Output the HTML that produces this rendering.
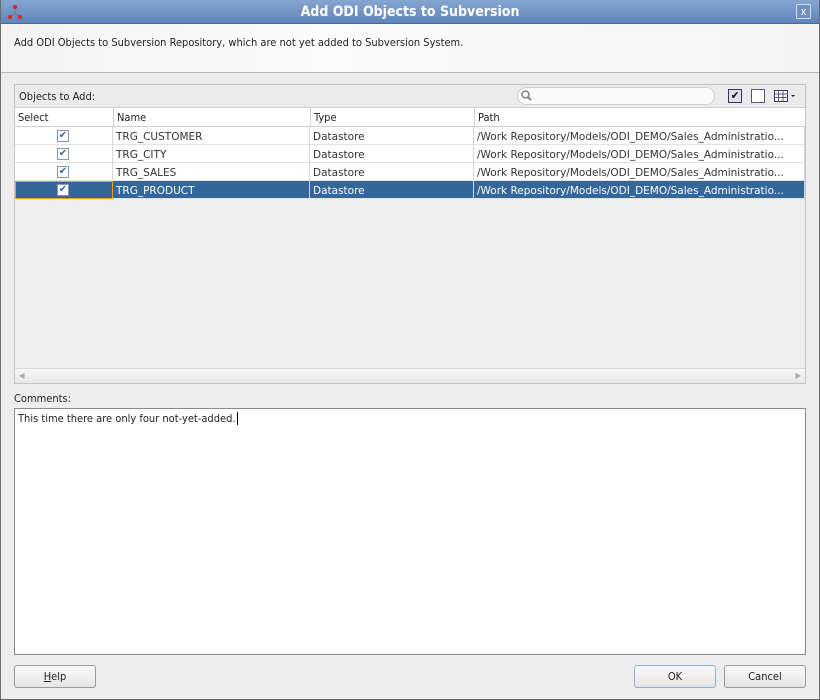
<!DOCTYPE html>
<html><head><style>
*{box-sizing:border-box;margin:0;padding:0}
body{width:820px;height:700px;background:#ededed;font-family:"DejaVu Sans Condensed","DejaVu Sans","Liberation Sans",sans-serif;font-size:11px;color:#222;position:relative;overflow:hidden}
.abs{position:absolute}
.frame{left:0;top:0;width:820px;height:700px;border:1px solid #6a6a6a;border-top:none}
.title{left:0;top:0;width:820px;height:24px;background:linear-gradient(#86a6d2,#5f84ba);border-bottom:1px solid #4a6a9a;color:#fff;font-weight:bold;font-size:14px;text-align:center;line-height:24px}
.hdr{left:1px;top:24px;width:818px;height:49px;background:linear-gradient(90deg,#f3f3f3,#fbfbfb 40%,#f4f4f4);border-bottom:1px solid #b8b8b8}
.panel{left:14px;top:84px;width:792px;height:300px;border:1px solid #c4c4c4;background:#eeeeee}
.tb{left:0;top:0;width:790px;height:23px;background:#ebebeb;border-bottom:1px solid #d0d0d0}
.row{position:absolute;left:0;width:790px;height:18px;background:#fff;border-bottom:1px solid #e2e2e2;font-family:"DejaVu Sans",sans-serif;font-size:10.5px;line-height:20px;color:#333}
.row div{position:absolute;top:0;height:18px;padding-left:3px;border-right:1px solid #d6d6d6;white-space:nowrap;overflow:hidden}
.c1{left:0;width:98px}.c2{left:98px;width:197px}.c3{left:295px;width:164px}.c4{left:459px;width:331px}
.cb{position:absolute;left:42px;top:3px;width:12px;height:12px;border:1px solid #8a96a8;background:#fff;color:#2e68b8;font-size:10px;line-height:10px;text-align:center;font-weight:bold}
.sel{background:#336699;color:#fff}
.btn{height:23px;border:1px solid #9a9a9a;border-radius:3px;background:linear-gradient(#fafafa,#e4e4e4);text-align:center;line-height:21px;font-size:11px}
</style></head><body>
<div class="abs title">Add ODI Objects to Subversion</div>
<svg class="abs" style="left:7px;top:4px" width="16" height="16"><line x1="8" y1="3" x2="8" y2="9" stroke="#777"/><line x1="8" y1="9" x2="3" y2="13" stroke="#777"/><line x1="8" y1="9" x2="13" y2="13" stroke="#777"/><circle cx="8" cy="3" r="2" fill="#d22"/><circle cx="3" cy="13" r="2" fill="#d22"/><circle cx="13" cy="13" r="2" fill="#d22"/></svg>
<div class="abs" style="left:796px;top:4px;width:15px;height:15px;border:1px solid #dde;border-radius:2px;color:#fff;font-size:11px;line-height:13px;text-align:center;background:#6f8fc0">x</div>
<div class="abs hdr"><div style="position:absolute;left:13px;top:12px">Add ODI Objects to Subversion Repository, which are not yet added to Subversion System.</div></div>
<div class="abs panel">
 <div class="abs tb"><div style="position:absolute;left:4px;top:5px">Objects to Add:</div>
  <div style="position:absolute;left:502px;top:2px;width:198px;height:18px;border:1px solid #d0d0d0;border-radius:9px;background:#fafafa"></div>
  <svg style="position:absolute;left:505px;top:4px" width="14" height="14"><circle cx="5.5" cy="5.5" r="3.5" fill="none" stroke="#888" stroke-width="1.6"/><line x1="8" y1="8" x2="11" y2="11" stroke="#888" stroke-width="2"/></svg>
  <div style="position:absolute;left:713px;top:4px;width:14px;height:14px;border:1px solid #336;background:#dde;font-size:11px;line-height:12px;text-align:center;color:#000">✔</div>
  <div style="position:absolute;left:736px;top:4px;width:14px;height:14px;border:1px solid #557;background:#fff"></div>
  <svg style="position:absolute;left:759px;top:4px" width="22" height="14"><rect x="0.5" y="1.5" width="13" height="11" fill="#fff" stroke="#336"/><path d="M0 5h14M0 8.5h14M4.5 1v12M9 1v12" stroke="#558"/><path d="M17 6h4l-2 2z" fill="#222"/></svg>
 </div>
 <div class="abs" style="left:0;top:23px;width:790px;height:19px;background:#fff;border-bottom:1px solid #d0d0d0;line-height:20px">
  <div style="position:absolute;left:3px">Select</div><div style="position:absolute;left:98px;top:0;height:19px;border-left:1px solid #d0d0d0;padding-left:3px">Name</div><div style="position:absolute;left:295px;top:0;height:19px;border-left:1px solid #d0d0d0;padding-left:3px">Type</div><div style="position:absolute;left:459px;top:0;height:19px;border-left:1px solid #d0d0d0;padding-left:3px">Path</div>
 </div>
 <div class="row" style="top:42px"><div class="c1"><span class="cb">✔</span></div><div class="c2">TRG_CUSTOMER</div><div class="c3">Datastore</div><div class="c4">/Work Repository/Models/ODI_DEMO/Sales_Administratio...</div></div>
 <div class="row" style="top:60px"><div class="c1"><span class="cb">✔</span></div><div class="c2">TRG_CITY</div><div class="c3">Datastore</div><div class="c4">/Work Repository/Models/ODI_DEMO/Sales_Administratio...</div></div>
 <div class="row" style="top:78px"><div class="c1"><span class="cb">✔</span></div><div class="c2">TRG_SALES</div><div class="c3">Datastore</div><div class="c4">/Work Repository/Models/ODI_DEMO/Sales_Administratio...</div></div>
 <div class="row sel" style="top:96px"><div class="c1" style="border:1px solid #f0a020"><span class="cb" style="top:2px;left:41px">✔</span></div><div class="c2">TRG_PRODUCT</div><div class="c3">Datastore</div><div class="c4">/Work Repository/Models/ODI_DEMO/Sales_Administratio...</div></div>
 <div class="abs" style="left:0;top:283px;width:790px;height:15px;background:linear-gradient(#f8f8f8,#e8e8e8);border-top:1px solid #d8d8d8;color:#aaa;font-size:8px;line-height:14px"><span style="position:absolute;left:4px">◀</span><span style="position:absolute;right:4px">▶</span></div>
</div>
<div class="abs" style="left:14px;top:392px">Comments:</div>
<div class="abs" style="left:14px;top:408px;width:792px;height:247px;background:#fff;border:1px solid #8a8a8a;padding:3px 3px"><span>This time there are only four not-yet-added.</span><span style="border-left:1px solid #000;margin-left:1px"></span></div>
<div class="abs btn" style="left:14px;top:665px;width:82px"><u>H</u>elp</div>
<div class="abs btn" style="left:634px;top:665px;width:82px;border-color:#8fb0d8">OK</div>
<div class="abs btn" style="left:724px;top:665px;width:82px">Cancel</div>
<div class="abs frame"></div>
</body></html>
